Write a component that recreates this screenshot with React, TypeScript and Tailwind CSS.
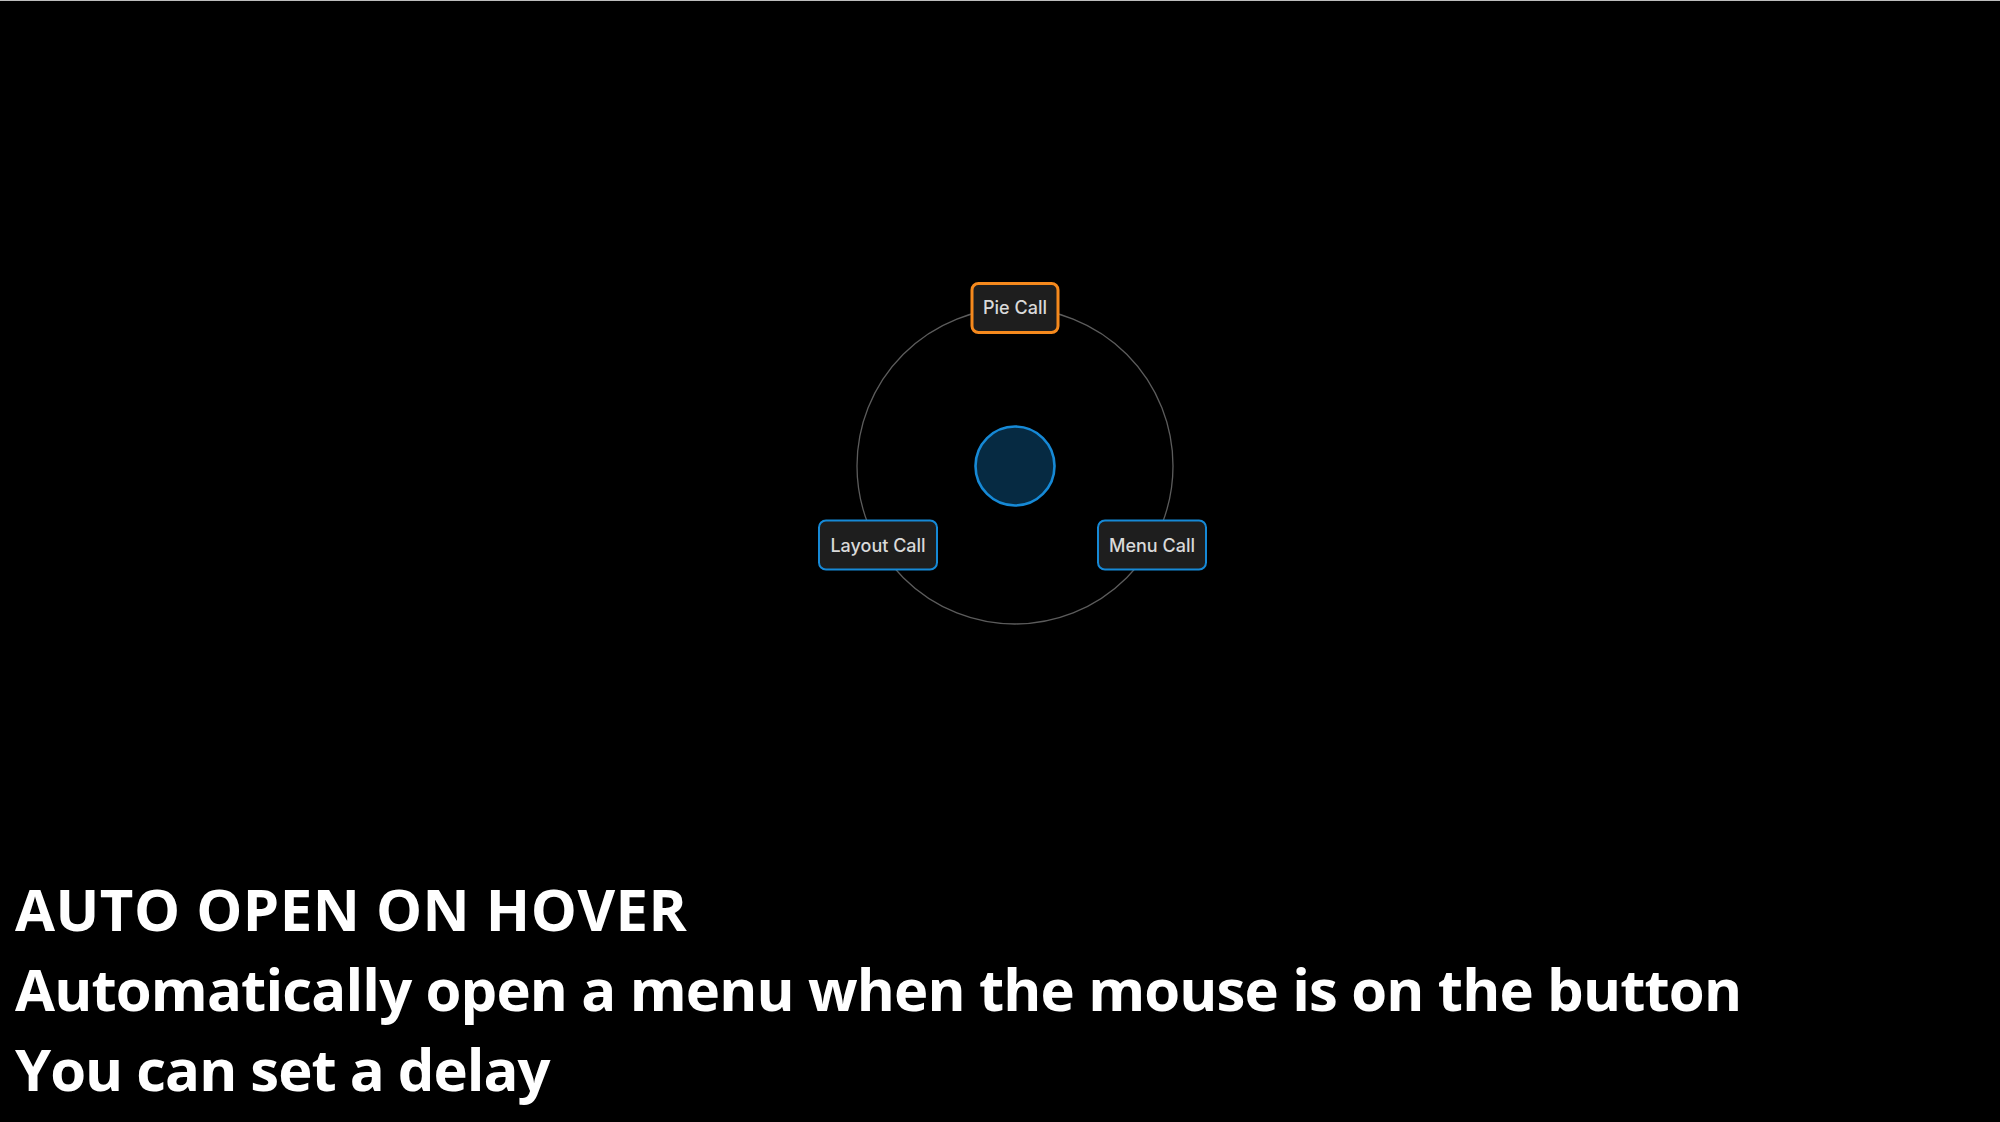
import React from "react";

const btnBase =
  "absolute flex items-center justify-center rounded-[8px] bg-[#1e1e1e] text-[18px] font-medium leading-none text-[#d9d9d9] whitespace-nowrap -translate-x-1/2 -translate-y-1/2";

export default function App() {
  return (
    <div className="w-[2000px] h-[1122px] bg-black border-t border-[#bdbdbd] overflow-hidden flex flex-col">
      <div className="pt-[265px] pl-[815px]">
        <div className="relative w-[400px] h-[400px]" style={{ fontFamily: "Inter, 'Noto Sans', sans-serif" }}>
          <svg className="absolute inset-0" width="400" height="400" viewBox="0 0 400 400">
            <circle cx="200" cy="200" r="158" fill="none" stroke="#5c5c5c" strokeWidth="1.3" />
            <circle cx="200" cy="200" r="39.5" fill="#062a42" stroke="#1689d6" strokeWidth="2.6" />
          </svg>
          <div className={`${btnBase} left-[200px] top-[42px] w-[89px] h-[52px] border-[3px] border-[#f5891d]`}>
            Pie Call
          </div>
          <div className={`${btnBase} left-[63px] top-[279px] w-[120px] h-[51px] border-[2.5px] border-[#1689d6]`}>
            Layout Call
          </div>
          <div className={`${btnBase} left-[337px] top-[279px] w-[110px] h-[51px] border-[2.5px] border-[#1689d6]`}>
            Menu Call
          </div>
        </div>
      </div>
      <div
        className="mt-[203px] pl-[15px] text-white font-bold text-[58px] leading-[80px] flex flex-col"
        style={{ fontFamily: "'Open Sans', 'Noto Sans', sans-serif" }}
      >
        <div className="tracking-[0.5px]">AUTO OPEN ON HOVER</div>
        <div className="tracking-[-0.85px]">Automatically open a menu when the mouse is on the button</div>
        <div className="tracking-[-1px]">You can set a delay</div>
      </div>
    </div>
  );
}
